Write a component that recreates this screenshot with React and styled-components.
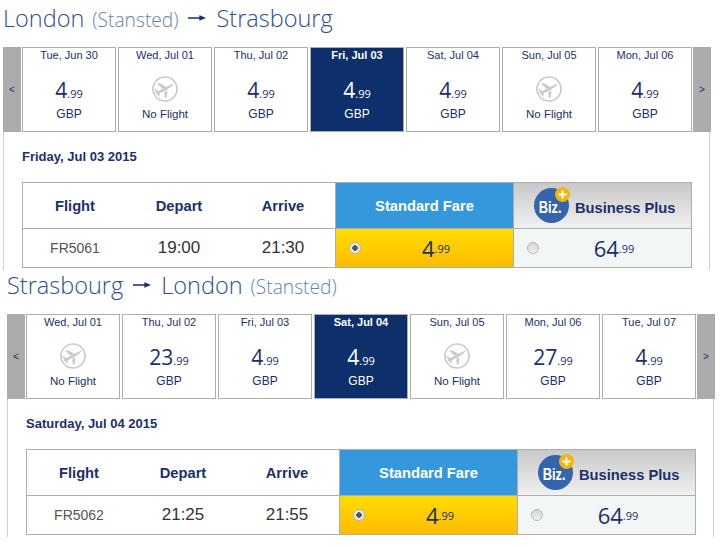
import React from 'react';
import styled, { createGlobalStyle } from 'styled-components';

const navy = '#1b2f6b';

const GlobalStyle = createGlobalStyle`
body{
    margin:0;
    background:#fff;
    font-family:"Liberation Sans", Arial, sans-serif;
    color:${navy};
}
`;

const Page = styled.div`
width:720px;
height:548px;
overflow:hidden;
`;

const Section = styled.section`
width:707px;
margin-left:${p => p.$left}px;
margin-top:${p => p.$top}px;
`;

const Title = styled.h2`
display:flex;
align-items:center;
gap:10px;
height:47px;
margin:0;
padding-bottom:12px;
box-sizing:border-box;
font-family:"Open Sans", sans-serif;
font-weight:300;
font-size:23.5px;
color:#2f4f90;
white-space:nowrap;
`;

const Airport = styled.span`
font-size:19.2px;
color:#6583b4;
margin-left:8px;
`;

const Place = styled.span`
display:inline-flex;
align-items:baseline;
`;

const Strip = styled.div`
display:flex;
height:85px;
`;

const Arrow = styled.div`
display:flex;
align-items:center;
justify-content:center;
width:18px;
flex:none;
margin-right:${p => p.$side === 'left' ? 1 : 0}px;
margin-left:${p => p.$side === 'right' ? 1 : 0}px;
background:#acacac;
font-size:10px;
color:${navy};
`;

const Days = styled.div`
display:flex;
gap:2px;
`;

const DayCard = styled.div`
display:flex;
flex-direction:column;
align-items:center;
width:94px;
box-sizing:border-box;
border:1px solid #aeaeae;
background:${p => p.$active ? '#0d2f6b' : '#fff'};
color:${p => p.$active ? '#fff' : navy};
`;

const DayName = styled.div`
height:14px;
line-height:14px;
font-size:11px;
font-weight:${p => p.$active ? 700 : 400};
white-space:nowrap;
`;

const DayPrice = styled.div`
margin-top:16px;
height:24px;
line-height:24px;
font-family:"Open Sans", sans-serif;
font-size:21px;
white-space:nowrap;
`;

const Cents = styled.span`
font-size:${p => p.$size || 11}px;
`;

const Currency = styled.div`
margin-top:5px;
line-height:14px;
font-size:12px;
`;

const NoFlightIcon = styled.svg`
display:block;
width:28px;
height:28px;
margin-top:13px;
`;

const NoFlightText = styled.div`
margin-top:4px;
line-height:14px;
font-size:11.5px;
`;

const Panel = styled.div`
height:138px;
box-sizing:border-box;
padding:0 17px 0 18px;
border-left:1px solid #d0d0d0;
border-right:1px solid #d0d0d0;
`;

const DateLine = styled.div`
height:50px;
padding-top:17px;
box-sizing:border-box;
font-size:13px;
font-weight:700;
white-space:nowrap;
`;

const Table = styled.div`
display:grid;
grid-template-columns:104px 104px 104px 178px 178px;
grid-template-rows:46px 38px;
width:670px;
box-sizing:border-box;
border:1px solid #aeaeae;
`;

const HeadCell = styled.div`
display:flex;
align-items:center;
justify-content:center;
box-sizing:border-box;
border-bottom:1px solid #aeaeae;
font-size:14.7px;
font-weight:700;
`;

const FareHead = styled(HeadCell)`
background:#3598dc;
color:#fff;
border-left:1px solid #aeaeae;
`;

const BusinessHead = styled(HeadCell)`
justify-content:flex-start;
gap:6px;
padding-left:20px;
background:linear-gradient(#c9c9c9, #f0f0f0);
border-left:1px solid #aeaeae;
`;

const BusinessLabel = styled.span`
padding-top:5px;
`;

const BizLogo = styled.div`
position:relative;
display:flex;
align-items:center;
justify-content:center;
width:35px;
height:35px;
padding:4px 3px 0 0;
box-sizing:border-box;
border-radius:50%;
background:#3563ae;
color:#fff;
font-size:17px;
font-weight:700;
`;

const BizText = styled.span`
display:block;
transform:scaleX(0.76);
`;

const BizBadge = styled.svg`
position:absolute;
top:-1px;
right:-1px;
width:15px;
height:15px;
`;

const Cell = styled.div`
display:flex;
align-items:center;
justify-content:center;
font-size:${p => p.$size}px;
color:${p => p.$color};
`;

const FareCell = styled.div`
position:relative;
display:flex;
align-items:center;
justify-content:center;
padding-left:23px;
border-left:1px solid #aeaeae;
background:${p => p.$selected ? 'linear-gradient(#ffdd00, #ffbb00)' : '#f3f6f7'};
font-family:"Open Sans", sans-serif;
font-size:22px;
color:${navy};
`;

const Radio = styled.span`
position:absolute;
left:13px;
top:13px;
width:12px;
height:12px;
box-sizing:border-box;
border:1px solid #b5b5b5;
border-radius:50%;
background:${p => p.$checked
        ? 'radial-gradient(circle, #555 0, #555 2.5px, #e8e8e8 3px)'
        : 'linear-gradient(#d6d6d6, #eee)'};
`;

const PlaneSlash = () => (
    <NoFlightIcon viewBox="0 0 28 28">
        <circle cx="14" cy="14" r="12" fill="#fff" stroke="#cacaca" strokeWidth="1.7" />
        <g transform="rotate(-28 14 14)" fill="#cacaca">
            <path d="M4 14c0-.7.6-1.2 1.3-1.2h15.2c1.4 0 3.5.5 3.5 1.2s-2.1 1.2-3.5 1.2H5.3C4.6 15.2 4 14.7 4 14z" />
            <path d="M16.5 13l-4.7-7h-2l2.3 7zM16.5 15l-4.7 7h-2l2.3-7z" />
            <path d="M7.5 13L5.3 9.6H4l.9 3.4zM7.5 15l-2.2 3.4H4l.9-3.4z" />
        </g>
        <path stroke="#fff" strokeWidth="1" d="M6 23L24 9" />
    </NoFlightIcon>
);

const Day = ({ day }) => (
    <DayCard $active={day.active}>
        <DayName $active={day.active}>{day.label}</DayName>
        {day.price ? (
            <>
                <DayPrice>{day.price}<Cents>.99</Cents></DayPrice>
                <Currency>GBP</Currency>
            </>
        ) : (
            <>
                <PlaneSlash />
                <NoFlightText>No Flight</NoFlightText>
            </>
        )}
    </DayCard>
);

const Flight = ({ flight }) => (
    <Section $left={flight.left} $top={flight.top}>
        <Title>
            {flight.title[0]}
            <svg width="18" height="8" viewBox="0 0 18 8"><path d="M0 4h14M12 2.2L16.5 4 12 5.8z" stroke="#1b2f6b" strokeWidth="1.3" fill="#1b2f6b" /></svg>
            {flight.title[1]}
        </Title>
        <Strip>
            <Arrow $side="left">&lt;</Arrow>
            <Days>
                {flight.days.map((day, index) => <Day key={index} day={day} />)}
            </Days>
            <Arrow $side="right">&gt;</Arrow>
        </Strip>
        <Panel>
            <DateLine>{flight.date}</DateLine>
            <Table>
                <HeadCell>Flight</HeadCell>
                <HeadCell>Depart</HeadCell>
                <HeadCell>Arrive</HeadCell>
                <FareHead>Standard Fare</FareHead>
                <BusinessHead>
                    <BizLogo>
                        <BizText>Biz.</BizText>
                        <BizBadge viewBox="0 0 15 15">
                            <circle cx="7.5" cy="7.5" r="7.5" fill="#f2b70d" />
                            <path d="M7.5 3.5v8M3.5 7.5h8" stroke="#fff" strokeWidth="2" />
                        </BizBadge>
                    </BizLogo>
                    <BusinessLabel>Business Plus</BusinessLabel>
                </BusinessHead>
                <Cell $size={14} $color="#555">{flight.number}</Cell>
                <Cell $size={17} $color="#333">{flight.depart}</Cell>
                <Cell $size={17} $color="#333">{flight.arrive}</Cell>
                <FareCell $selected>
                    <Radio $checked />
                    4<Cents $size={11}>.99</Cents>
                </FareCell>
                <FareCell>
                    <Radio />
                    64<Cents $size={11}>.99</Cents>
                </FareCell>
            </Table>
        </Panel>
    </Section>
);

const London = () => <Place>London<Airport>(Stansted)</Airport></Place>;

const flights = [
    {
        left: 3,
        top: 0,
        title: [<London key="l" />, 'Strasbourg'],
        date: 'Friday, Jul 03 2015',
        number: 'FR5061',
        depart: '19:00',
        arrive: '21:30',
        days: [
            { label: 'Tue, Jun 30', price: '4' },
            { label: 'Wed, Jul 01' },
            { label: 'Thu, Jul 02', price: '4' },
            { label: 'Fri, Jul 03', price: '4', active: true },
            { label: 'Sat, Jul 04', price: '4' },
            { label: 'Sun, Jul 05' },
            { label: 'Mon, Jul 06', price: '4' },
        ],
    },
    {
        left: 7,
        top: -3,
        title: ['Strasbourg', <London key="l" />],
        date: 'Saturday, Jul 04 2015',
        number: 'FR5062',
        depart: '21:25',
        arrive: '21:55',
        days: [
            { label: 'Wed, Jul 01' },
            { label: 'Thu, Jul 02', price: '23' },
            { label: 'Fri, Jul 03', price: '4' },
            { label: 'Sat, Jul 04', price: '4', active: true },
            { label: 'Sun, Jul 05' },
            { label: 'Mon, Jul 06', price: '27' },
            { label: 'Tue, Jul 07', price: '4' },
        ],
    },
];

const App = () => (
    <Page>
        <GlobalStyle />
        {flights.map((flight, index) => <Flight key={index} flight={flight} />)}
    </Page>
);

export default App;
